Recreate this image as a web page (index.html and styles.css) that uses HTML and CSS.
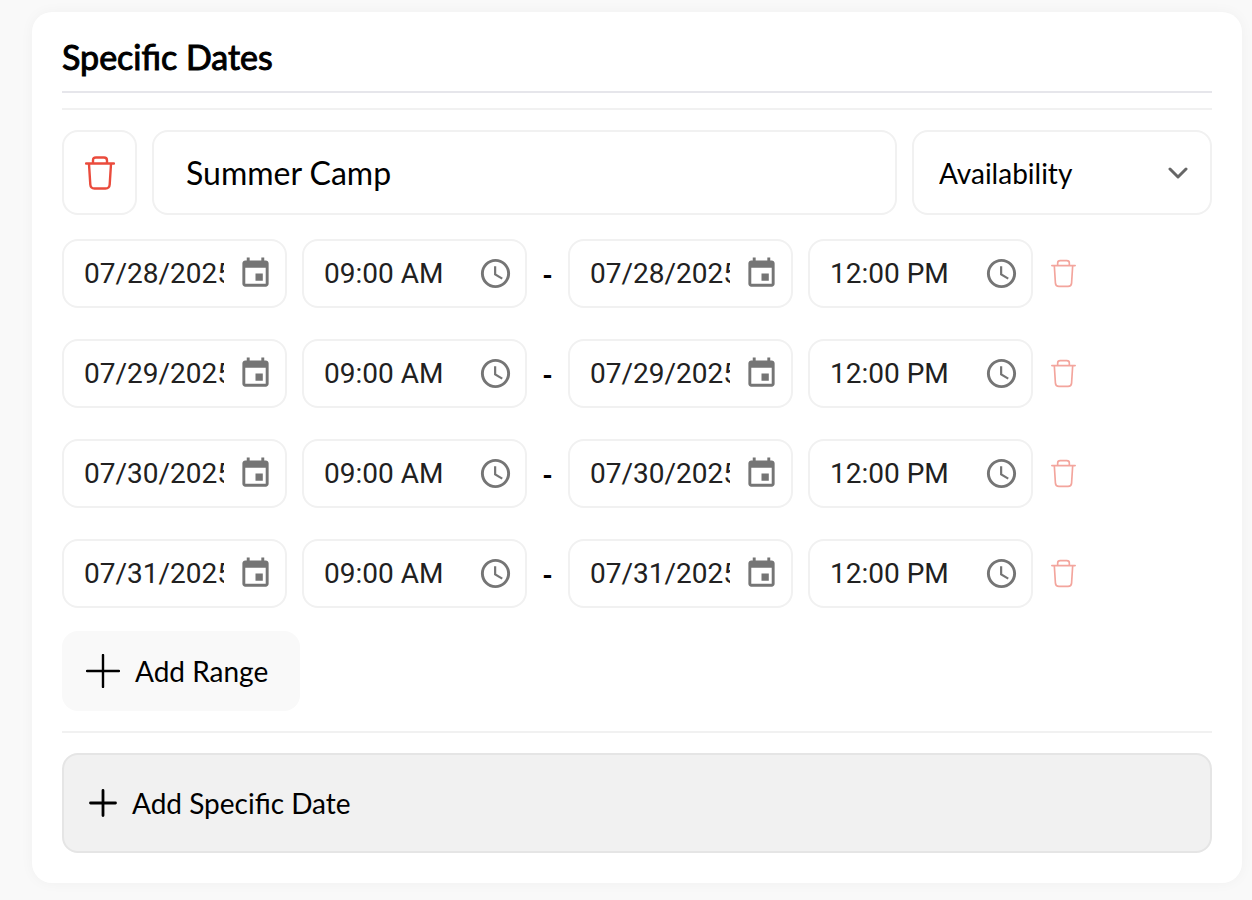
FILE: index.html
```html
<!DOCTYPE html>
<html lang="en">
<head>
<meta charset="utf-8">
<title>Specific Dates</title>
<link rel="stylesheet" href="styles.css">
</head>
<body>
<svg class="sprite" aria-hidden="true">
  <symbol id="trash" viewBox="0 0 30 34">
    <path d="M1 7.500H29M8 7V4.500Q8 1.500 11 1.500H19Q22 1.500 22 4.500V7M4 8L5.300 28.500Q5.600 32.500 9.500 32.500H20.500Q24.400 32.500 24.700 28.500L26 8" fill="none" stroke="currentColor" stroke-linecap="round" stroke-linejoin="round"/>
  </symbol>
  <symbol id="calendar" viewBox="0 0 24 24">
    <path fill="currentColor" d="M17 12h-5v5h5v-5zM16 1v2H8V1H6v2H5c-1.110 0-1.990.9-1.990 2L3 19c0 1.100.89 2 2 2h14c1.100 0 2-.9 2-2V5c0-1.100-.9-2-2-2h-1V1h-2zm3 18H5V8h14v11z"/>
  </symbol>
  <symbol id="clock" viewBox="0 0 24 24">
    <path fill="currentColor" d="M11.990 2C6.470 2 2 6.480 2 12s4.470 10 9.990 10C17.520 22 22 17.520 22 12S17.520 2 11.990 2zM12 20c-4.420 0-8-3.580-8-8s3.580-8 8-8 8 3.580 8 8-3.580 8-8 8z"/>
    <path fill="currentColor" d="M12.500 7H11v6l5.250 3.150.75-1.230-4.500-2.670z"/>
  </symbol>
</svg>
<main class="card">
  <h2 class="title">Specific Dates</h2>
  <section class="group">
    <div class="head">
      <button class="remove" type="button" aria-label="Delete specific date"><svg class="trash"><use href="#trash"/></svg></button>
      <input class="name" type="text" aria-label="Name" value="Summer Camp">
      <div class="select">
        <select aria-label="Type"><option>Availability</option><option>Unavailability</option></select>
        <svg class="chevron" viewBox="0 0 20 12"><path d="M2 2L10 10L18 2" fill="none" stroke="currentColor" stroke-width="3" stroke-linecap="round" stroke-linejoin="round"/></svg>
      </div>
    </div>
    <div class="ranges">
      <div class="range">
        <div class="field"><input type="text" aria-label="Start date" value="07/28/2025"><button type="button" aria-label="Choose start date"><svg><use href="#calendar"/></svg></button></div>
        <div class="field"><input type="text" aria-label="Start time" value="09:00 AM"><button type="button" aria-label="Choose start time"><svg><use href="#clock"/></svg></button></div>
        <span class="dash">-</span>
        <div class="field"><input type="text" aria-label="End date" value="07/28/2025"><button type="button" aria-label="Choose end date"><svg><use href="#calendar"/></svg></button></div>
        <div class="field"><input type="text" aria-label="End time" value="12:00 PM"><button type="button" aria-label="Choose end time"><svg><use href="#clock"/></svg></button></div>
        <button class="remove-range" type="button" aria-label="Delete range"><svg class="trash"><use href="#trash"/></svg></button>
      </div>
      <div class="range">
        <div class="field"><input type="text" aria-label="Start date" value="07/29/2025"><button type="button" aria-label="Choose start date"><svg><use href="#calendar"/></svg></button></div>
        <div class="field"><input type="text" aria-label="Start time" value="09:00 AM"><button type="button" aria-label="Choose start time"><svg><use href="#clock"/></svg></button></div>
        <span class="dash">-</span>
        <div class="field"><input type="text" aria-label="End date" value="07/29/2025"><button type="button" aria-label="Choose end date"><svg><use href="#calendar"/></svg></button></div>
        <div class="field"><input type="text" aria-label="End time" value="12:00 PM"><button type="button" aria-label="Choose end time"><svg><use href="#clock"/></svg></button></div>
        <button class="remove-range" type="button" aria-label="Delete range"><svg class="trash"><use href="#trash"/></svg></button>
      </div>
      <div class="range">
        <div class="field"><input type="text" aria-label="Start date" value="07/30/2025"><button type="button" aria-label="Choose start date"><svg><use href="#calendar"/></svg></button></div>
        <div class="field"><input type="text" aria-label="Start time" value="09:00 AM"><button type="button" aria-label="Choose start time"><svg><use href="#clock"/></svg></button></div>
        <span class="dash">-</span>
        <div class="field"><input type="text" aria-label="End date" value="07/30/2025"><button type="button" aria-label="Choose end date"><svg><use href="#calendar"/></svg></button></div>
        <div class="field"><input type="text" aria-label="End time" value="12:00 PM"><button type="button" aria-label="Choose end time"><svg><use href="#clock"/></svg></button></div>
        <button class="remove-range" type="button" aria-label="Delete range"><svg class="trash"><use href="#trash"/></svg></button>
      </div>
      <div class="range">
        <div class="field"><input type="text" aria-label="Start date" value="07/31/2025"><button type="button" aria-label="Choose start date"><svg><use href="#calendar"/></svg></button></div>
        <div class="field"><input type="text" aria-label="Start time" value="09:00 AM"><button type="button" aria-label="Choose start time"><svg><use href="#clock"/></svg></button></div>
        <span class="dash">-</span>
        <div class="field"><input type="text" aria-label="End date" value="07/31/2025"><button type="button" aria-label="Choose end date"><svg><use href="#calendar"/></svg></button></div>
        <div class="field"><input type="text" aria-label="End time" value="12:00 PM"><button type="button" aria-label="Choose end time"><svg><use href="#clock"/></svg></button></div>
        <button class="remove-range" type="button" aria-label="Delete range"><svg class="trash"><use href="#trash"/></svg></button>
      </div>
    </div>
    <button class="add-range" type="button"><svg class="plus-large" viewBox="0 0 34 34"><path d="M17 1V33M1 17H33" stroke="currentColor" stroke-width="2.400" stroke-linecap="round"/></svg>Add Range</button>
  </section>
  <button class="add-date" type="button"><svg class="plus" viewBox="0 0 28 28"><path d="M14 1.500V26.500M1.500 14H26.500" stroke="currentColor" stroke-width="2.800" stroke-linecap="round"/></svg>Add Specific Date</button>
</main>
</body>
</html>
```
FILE: styles.css
```css
* {
  box-sizing: border-box;
}

body {
  margin: 0;
  padding: 12px 10px 17px 32px;
  background: #f9f9f9;
  color: #000;
  font-family: Lato, sans-serif;
  font-size: 28px;
}

button,
input,
select {
  margin: 0;
  padding: 0;
  border: 0;
  background: none;
  color: inherit;
  font: inherit;
}

button {
  cursor: pointer;
}

svg {
  display: block;
  flex: none;
}

.sprite {
  display: none;
}

.card {
  padding: 23px 30px 30px;
  border-radius: 20px;
  background: #fff;
  box-shadow: 0 0 14px rgba(0, 0, 0, 0.04);
}

.title {
  margin: 0 0 15px;
  padding-bottom: 12px;
  border-bottom: 2px solid #e6e6eb;
  font-size: 34px;
  font-weight: 400;
  line-height: 44px;
  -webkit-text-stroke: 1px #000;
}

.group {
  padding: 20px 0;
  border-top: 2px solid #f1f1f1;
  border-bottom: 2px solid #f1f1f1;
}

.head {
  display: flex;
  gap: 15px;
  height: 85px;
}

.remove,
.name,
.select {
  border: 2px solid #f1f1f1;
  border-radius: 16px;
}

.remove {
  display: flex;
  flex: none;
  align-items: center;
  justify-content: center;
  width: 75px;
  color: #ea4b3c;
}

.remove .trash {
  width: 30px;
  height: 34px;
  stroke-width: 2.400;
}

.name {
  flex: 1;
  min-width: 0;
  padding: 0 32px;
  font-size: 32px;
}

.select {
  display: grid;
  flex: none;
  align-items: center;
  width: 300px;
}

.select select {
  grid-area: 1 / 1;
  width: 100%;
  height: 100%;
  padding: 0 25px;
  appearance: none;
}

.chevron {
  grid-area: 1 / 1;
  justify-self: end;
  width: 20px;
  height: 12px;
  margin-right: 22px;
  color: #666;
  pointer-events: none;
}

.ranges {
  display: grid;
  gap: 31px;
  margin: 24px 0 23px;
}

.range {
  display: flex;
  align-items: center;
  gap: 15px;
}

.field {
  display: flex;
  align-items: center;
  gap: 14px;
  width: 225px;
  height: 69px;
  padding: 0 12px 0 20px;
  border: 2px solid #f1f1f1;
  border-radius: 16px;
  color: #212121;
  font-family: Roboto, sans-serif;
}

.field input {
  flex: 1;
  min-width: 0;
}

.field button {
  color: #757575;
}

.field svg {
  width: 35px;
  height: 35px;
}

.dash {
  width: 11px;
  font-weight: 700;
  text-align: center;
}

.remove-range {
  margin-left: 3px;
  color: #f3a59d;
}

.remove-range .trash {
  width: 25px;
  height: 29px;
  stroke-width: 2;
}

.add-range,
.add-date {
  display: flex;
  align-items: center;
  gap: 15px;
  border-radius: 16px;
}

.add-range {
  height: 80px;
  padding: 0 32px 0 24px;
  background: #f9f9f9;
}

.plus-large {
  width: 34px;
  height: 34px;
}

.add-date {
  width: 100%;
  height: 100px;
  margin-top: 20px;
  padding: 0 25px;
  border: 2px solid #e5e5e5;
  background: #f1f1f1;
}

.plus {
  width: 28px;
  height: 28px;
}
```
